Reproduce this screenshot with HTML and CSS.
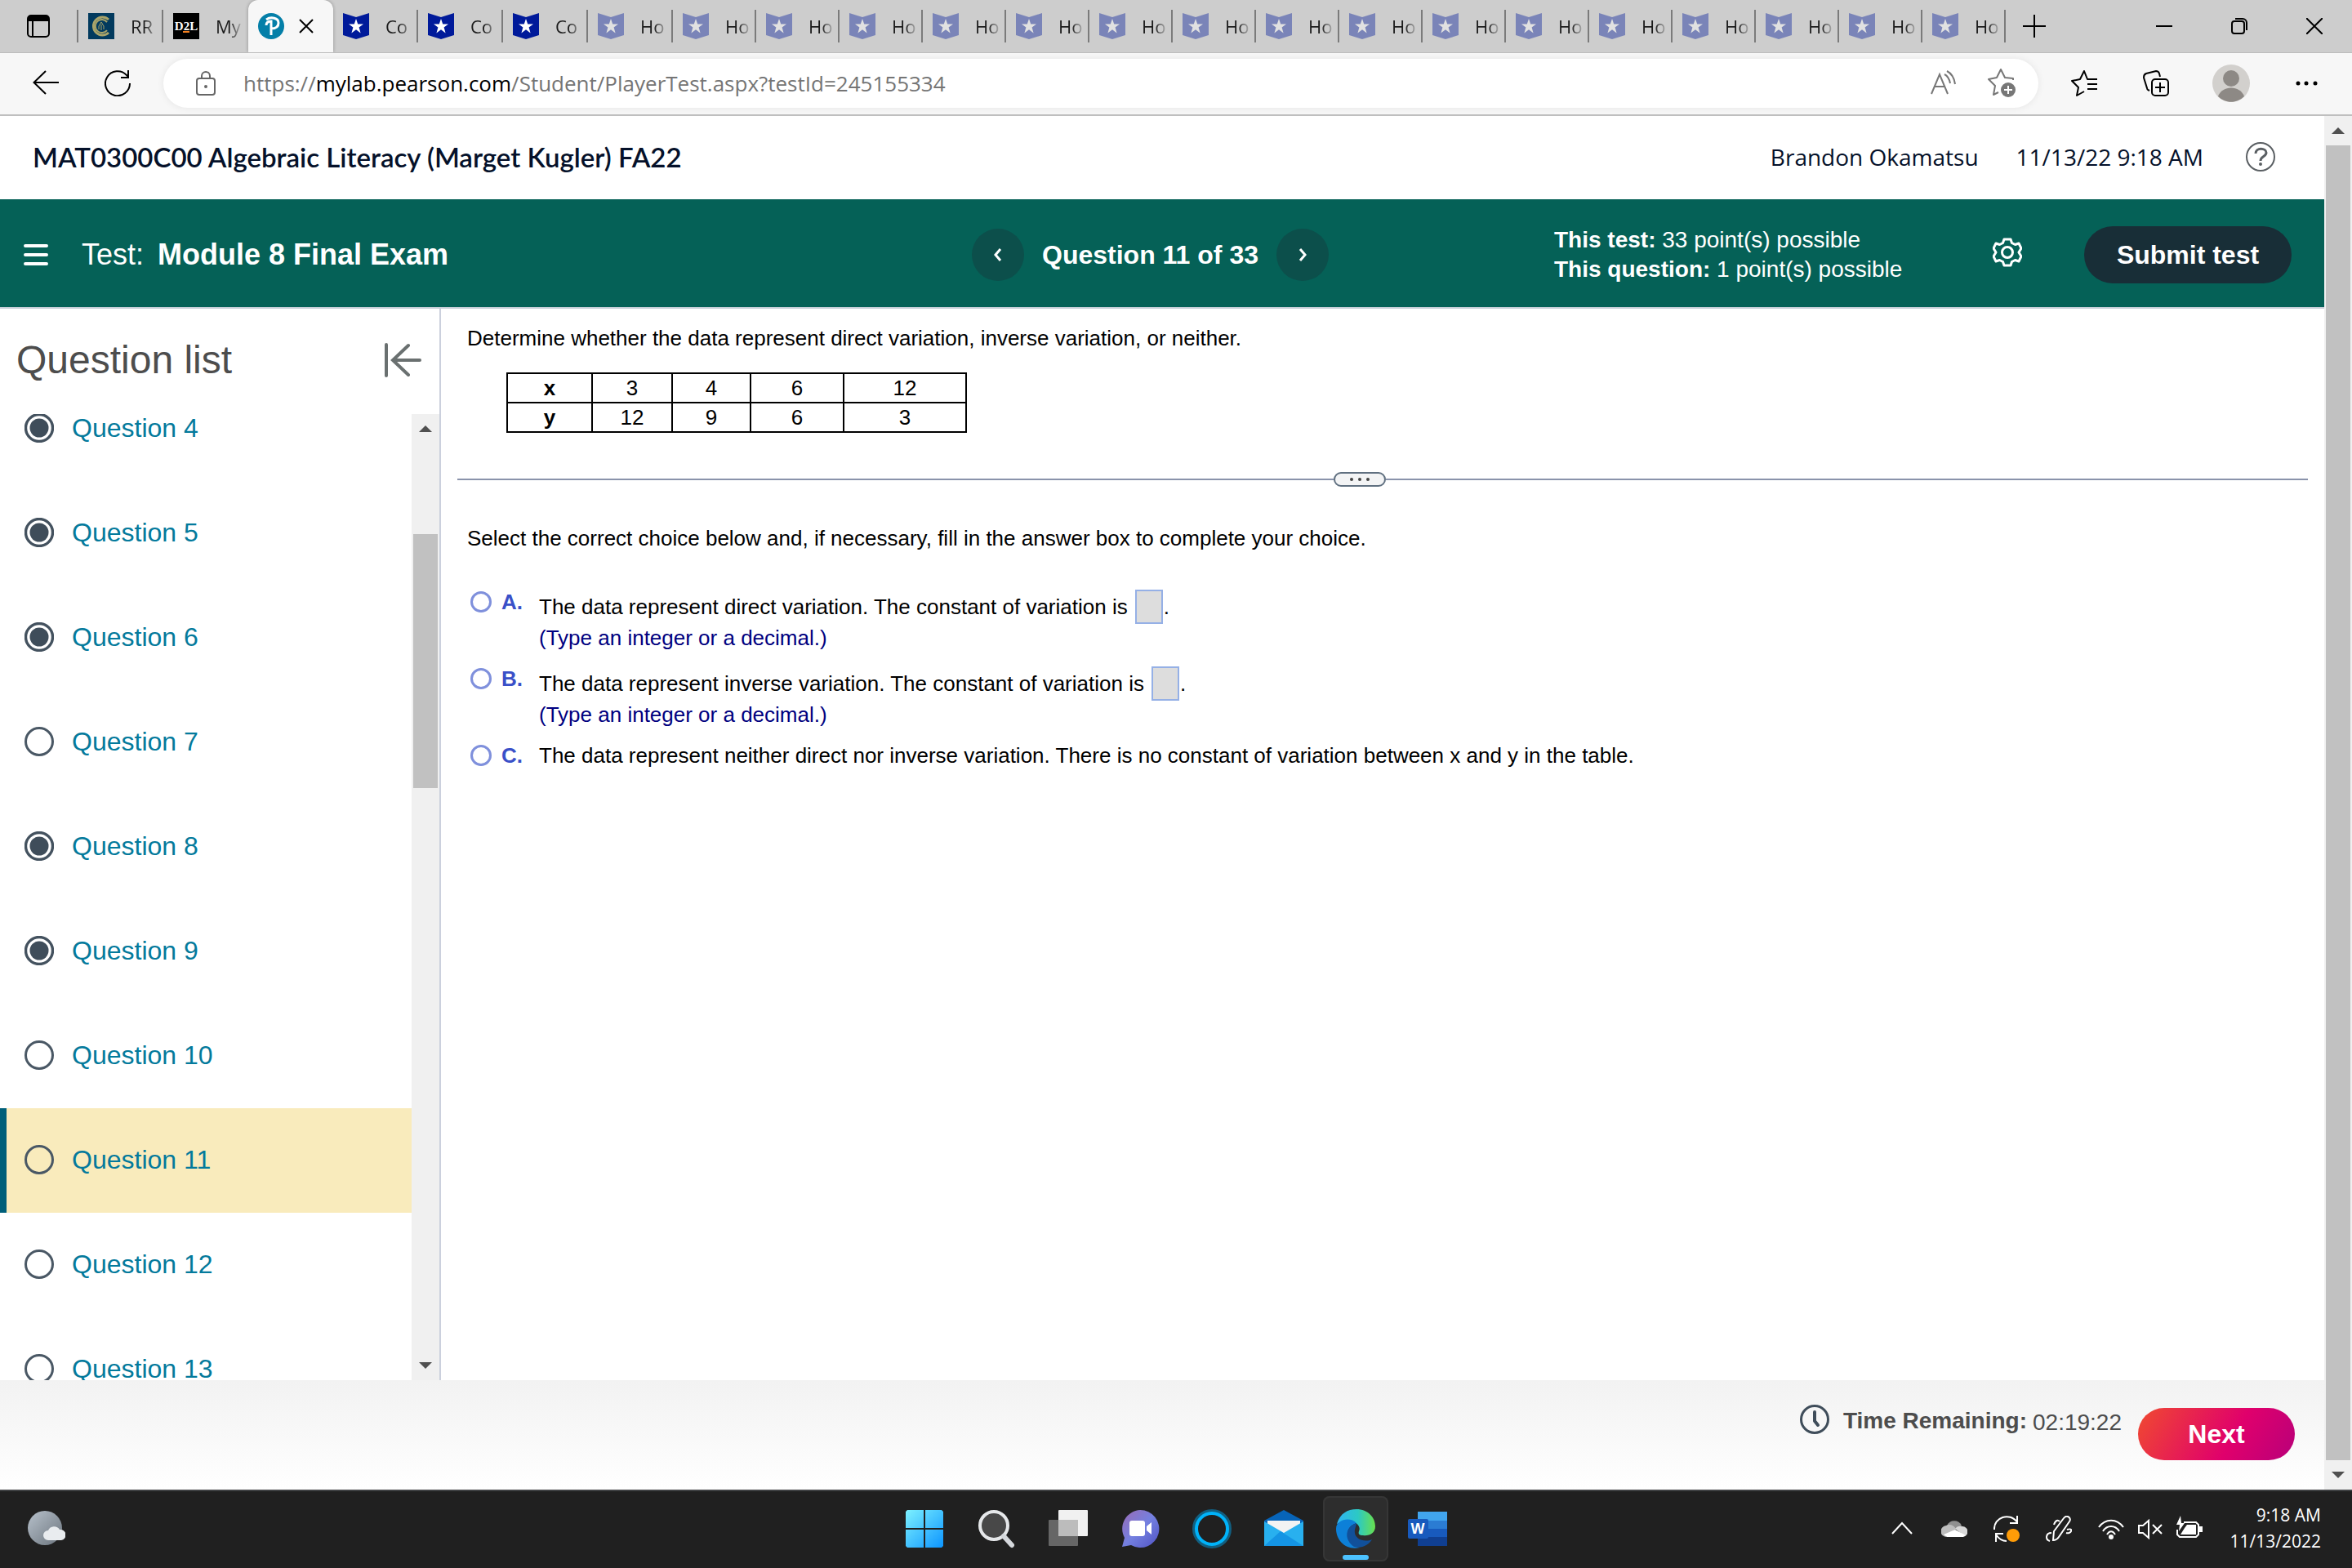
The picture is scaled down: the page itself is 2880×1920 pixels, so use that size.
FILE: index.html
```
<!DOCTYPE html>
<html lang="en">

<head>
    <meta charset="UTF-8">
    <title>Module 8 Final Exam</title>
    <link rel="stylesheet" href="styles.css">
</head>

<body>
    <!-- shared icons -->
    <svg class="defs" width="0" height="0">
        <defs>
            <symbol id="badge" viewBox="0 0 32 32">
                <path d="M0 0l16 5L32 0v27l-16 5-16-5z" fill="#001a9a" />
                <path d="M16 7l2.200 6.400h6.800l-5.400 4.100 2 6.900-5.600-4.100-5.600 4.100 2-6.900L7 13.400h6.800z" fill="#fff" />
            </symbol>
            <symbol id="done" viewBox="0 0 36 36">
                <circle cx="18" cy="18" r="16.500" fill="#fff" stroke="#44525f" stroke-width="3.400" />
                <circle cx="18" cy="18" r="11.500" fill="#3f4d5a" />
            </symbol>
            <symbol id="open" viewBox="0 0 36 36">
                <circle cx="18" cy="18" r="16.500" fill="none" stroke="#4a5865" stroke-width="3" />
            </symbol>
        </defs>
    </svg>

    <header class="tabs">
        <button class="tab-actions" aria-label="Tab actions">
            <svg width="28" height="28" viewBox="0 0 28 28"><rect x="1" y="1" width="26" height="26" rx="4" fill="none" stroke="#000" stroke-width="2" /><path d="M1 8V5a4 4 0 0 1 4-4h18a4 4 0 0 1 4 4v3z" /><path d="M7 8v19" stroke="#000" stroke-width="2" /></svg>
        </button>
        <a class="tab" href="#">
            <svg class="icon" viewBox="0 0 32 32"><path d="M0 0h32v32H0z" fill="#023a5e" /><g fill="none" stroke="#a9a46a"><path d="M25 8a11 11 0 1 0 0 16" stroke-width="3" /><path d="M23 11a8 8 0 1 0 0 10" stroke-width="2" /><path d="M13 20v-4l3-5 3 5v4M16 14v7" /></g></svg>
            <span class="name">RR</span>
        </a>
        <a class="tab no-line" href="#">
            <svg class="icon" viewBox="0 0 32 32"><path d="M0 0h32v32H0z" /><path d="M12 23h8" stroke="#f58020" stroke-width="2" /><text x="16" y="21" class="d2l">D2L</text></svg>
            <span class="name">My</span>
        </a>
        <div class="tab active">
            <svg class="icon" viewBox="0 0 32 32"><circle cx="16" cy="16" r="16" fill="#047fa8" /><path d="M16 27V10c-4 0-6 2-6 5M10 8c6-4 15-2 15 4 0 5-4 7-9 7" fill="none" stroke="#fff" stroke-width="3" /></svg>
            <button class="close" aria-label="Close tab"><svg width="18" height="18" viewBox="0 0 18 18"><path d="M1 1l16 16M17 1L1 17" stroke="#000" stroke-width="2" /></svg></button>
        </div>
        <a class="tab" href="#"><svg class="icon"><use href="#badge" /></svg><span class="name">Co</span></a>
        <a class="tab" href="#"><svg class="icon"><use href="#badge" /></svg><span class="name">Co</span></a>
        <a class="tab" href="#"><svg class="icon"><use href="#badge" /></svg><span class="name">Co</span></a>
        <a class="tab asleep" href="#"><svg class="icon"><use href="#badge" /></svg><span class="name">Ho</span></a>
        <a class="tab asleep narrow" href="#"><svg class="icon"><use href="#badge" /></svg><span class="name">Ho</span></a>
        <a class="tab asleep narrow" href="#"><svg class="icon"><use href="#badge" /></svg><span class="name">Ho</span></a>
        <a class="tab asleep narrow" href="#"><svg class="icon"><use href="#badge" /></svg><span class="name">Ho</span></a>
        <a class="tab asleep narrow" href="#"><svg class="icon"><use href="#badge" /></svg><span class="name">Ho</span></a>
        <a class="tab asleep narrow" href="#"><svg class="icon"><use href="#badge" /></svg><span class="name">Ho</span></a>
        <a class="tab asleep narrow" href="#"><svg class="icon"><use href="#badge" /></svg><span class="name">Ho</span></a>
        <a class="tab asleep narrow" href="#"><svg class="icon"><use href="#badge" /></svg><span class="name">Ho</span></a>
        <a class="tab asleep narrow" href="#"><svg class="icon"><use href="#badge" /></svg><span class="name">Ho</span></a>
        <a class="tab asleep narrow" href="#"><svg class="icon"><use href="#badge" /></svg><span class="name">Ho</span></a>
        <a class="tab asleep narrow" href="#"><svg class="icon"><use href="#badge" /></svg><span class="name">Ho</span></a>
        <a class="tab asleep narrow" href="#"><svg class="icon"><use href="#badge" /></svg><span class="name">Ho</span></a>
        <a class="tab asleep narrow" href="#"><svg class="icon"><use href="#badge" /></svg><span class="name">Ho</span></a>
        <a class="tab asleep narrow" href="#"><svg class="icon"><use href="#badge" /></svg><span class="name">Ho</span></a>
        <a class="tab asleep narrow" href="#"><svg class="icon"><use href="#badge" /></svg><span class="name">Ho</span></a>
        <a class="tab asleep narrow" href="#"><svg class="icon"><use href="#badge" /></svg><span class="name">Ho</span></a>
        <a class="tab asleep narrow" href="#"><svg class="icon"><use href="#badge" /></svg><span class="name">Ho</span></a>
        <button class="new-tab" aria-label="New tab"><svg width="28" height="28" viewBox="0 0 28 28"><path d="M14 0v28M0 14h28" stroke="#000" stroke-width="2" /></svg></button>
        <div class="window-buttons">
            <button aria-label="Minimize"><svg width="20" height="20" viewBox="0 0 20 20"><path d="M0 10h20" stroke="#000" stroke-width="2" /></svg></button>
            <button aria-label="Restore"><svg width="20" height="20" viewBox="0 0 20 20" fill="none" stroke="#000" stroke-width="2"><rect x="1" y="4" width="15" height="15" rx="3" /><path d="M5 1h9a5 5 0 0 1 5 5v9" /></svg></button>
            <button aria-label="Close"><svg width="20" height="20" viewBox="0 0 20 20"><path d="M0 0l20 20M20 0L0 20" stroke="#000" stroke-width="2" /></svg></button>
        </div>
    </header>

    <nav class="toolbar">
        <button class="back" aria-label="Back"><svg width="32" height="32" viewBox="0 0 32 32" fill="none" stroke="#000" stroke-width="2"><path d="M32 15H1M16 1L1.500 15 16 29" /></svg></button>
        <button class="reload" aria-label="Refresh"><svg width="32" height="32" viewBox="0 0 32 32" fill="none" stroke="#000" stroke-width="2"><path d="M31 16A15 15 0 1 1 27 6l2 2.500M29 0v9h-9" /></svg></button>
        <div class="address">
            <svg class="lock" width="24" height="30" viewBox="0 0 24 30" fill="none" stroke="#666" stroke-width="2"><rect x="1" y="9" width="22" height="20" rx="3" /><path d="M7 9V6a5 5 0 0 1 10 0v3" /><circle cx="12" cy="19" r="1" fill="#666" /></svg>
            <div class="url" role="textbox" aria-label="Address">https://<b>mylab.pearson.com</b>/Student/PlayerTest.aspx?testId=245155334</div>
            <button aria-label="Read aloud"><svg width="32" height="32" viewBox="0 0 32 32" fill="none" stroke="#777" stroke-width="2"><path d="M1 29L11 5l10 24M5 20h12M17 5c4 2 6 6 7 11M20 1c6 3 9 9 10 16" /></svg></button>
            <button aria-label="Add to favorites"><svg width="36" height="36" viewBox="0 0 36 36"><path d="M31 14v-2l-10-1-5-10-5 10-10 2 8 8-2 11 6-3" fill="none" stroke="#777" stroke-width="2" stroke-linejoin="round" /><circle cx="25" cy="26" r="9" fill="#777" /><path d="M25 21v10M20 26h10" stroke="#fff" stroke-width="2" /></svg></button>
        </div>
        <button aria-label="Favorites"><svg width="32" height="32" viewBox="0 0 32 32" fill="none" stroke="#000" stroke-width="2" stroke-linejoin="round"><path d="M32 11H20L16 1l-5 10-10 2 8 8-2 10 9-5M20 17h12M20 23h12" /></svg></button>
        <button class="collections" aria-label="Collections"><svg width="32" height="32" viewBox="0 0 32 32" fill="none" stroke="#000" stroke-width="2"><rect x="11" y="11" width="20" height="20" rx="4" /><path d="M21 15v12M15 21h12M21 8l-1-4c-1-3-3-3-4-3L4 4C1 5 1 7 1 9l4 13c0 2 1 2 3 3" /></svg></button>
        <button class="avatar" aria-label="Profile"><svg width="48" height="48" viewBox="0 0 48 48"><circle cx="24" cy="24" r="23" fill="#d2d0cd" /><circle cx="24" cy="18" r="10" fill="#8d8985" /><path d="M8 40c5-14 27-14 32 0-9 9-23 9-32 0z" fill="#8d8985" /></svg></button>
        <button class="more" aria-label="Settings and more"><svg width="32" height="32" viewBox="0 0 32 32"><circle cx="6" cy="16" r="2.500" /><circle cx="16" cy="16" r="2.500" /><circle cx="27" cy="16" r="2.500" /></svg></button>
    </nav>

    <div class="viewport">
        <div class="page">
            <div class="course">
                <h1>MAT0300C00 Algebraic Literacy (Marget Kugler) FA22</h1>
                <span class="user">Brandon Okamatsu</span>
                <span class="date">11/13/22 9:18 AM</span>
                <button class="help" aria-label="Help"><svg width="36" height="36" viewBox="0 0 36 36" fill="none" stroke="#5a5f63" stroke-width="2"><circle cx="18" cy="18" r="17" /><path d="M12 14c0-8 13-7 13-1 0 5-7 4-7 10" stroke-width="3" /><circle cx="18" cy="27" r="1" /></svg></button>
            </div>

            <div class="test-bar">
                <div class="test-name">
                    <button class="menu" aria-label="Menu"><svg width="32" height="28" viewBox="0 0 32 28"><path d="M3 3h26M3 14h26M3 25h26" stroke="#fff" stroke-width="4" stroke-linecap="round" /></svg></button>
                    <span>Test:</span>
                    <strong>Module 8 Final Exam</strong>
                </div>
                <div class="pager">
                    <button aria-label="Previous question"><svg width="12" height="16" viewBox="0 0 12 16"><path d="M9 1L3 8l6 7" fill="none" stroke="#fff" stroke-width="3" /></svg></button>
                    <strong>Question 11 of 33</strong>
                    <button aria-label="Next question"><svg width="12" height="16" viewBox="0 0 12 16"><path d="M3 1l6 7-6 7" fill="none" stroke="#fff" stroke-width="3" /></svg></button>
                </div>
                <div class="points">
                    <div><strong>This test:</strong> 33 point(s) possible</div>
                    <div><strong>This question:</strong> 1 point(s) possible</div>
                </div>
                <div class="test-actions">
                    <button class="gear" aria-label="Settings"><svg width="36" height="36" viewBox="0 0 36 36" fill="none" stroke="#fff" stroke-width="3" stroke-linejoin="round"><circle cx="18" cy="18" r="6.500" /><path d="M14 2h8l1.500 4.500 4 2 4.500-1.500 3 6-3 5 3 5-3 6-4.500-1.500-4 2L22 34h-8l-1.500-4.500-4-2L4 29l-3-6 3-5-3-5 3-6 4.500 1.500 4-2z" /></svg></button>
                    <button class="submit">Submit test</button>
                </div>
            </div>

            <div class="columns">
                <aside class="sidebar">
                    <div class="sidebar-head">
                        <h2>Question list</h2>
                        <button aria-label="Collapse list"><svg width="46" height="42" viewBox="0 0 46 42" fill="none" stroke="#6a7070" stroke-width="4" stroke-linecap="round"><path d="M3 2v38M44 21H12M30 3L11 21l19 18" /></svg></button>
                    </div>
                    <div class="list-box">
                        <ul class="list">
                            <li><a href="#"><svg><use href="#done" /></svg>Question 4</a></li>
                            <li><a href="#"><svg><use href="#done" /></svg>Question 5</a></li>
                            <li><a href="#"><svg><use href="#done" /></svg>Question 6</a></li>
                            <li><a href="#"><svg><use href="#open" /></svg>Question 7</a></li>
                            <li><a href="#"><svg><use href="#done" /></svg>Question 8</a></li>
                            <li><a href="#"><svg><use href="#done" /></svg>Question 9</a></li>
                            <li><a href="#"><svg><use href="#open" /></svg>Question 10</a></li>
                            <li class="current"><a href="#"><svg><use href="#open" /></svg>Question 11</a></li>
                            <li><a href="#"><svg><use href="#open" /></svg>Question 12</a></li>
                            <li><a href="#"><svg><use href="#open" /></svg>Question 13</a></li>
                        </ul>
                        <div class="scrollbar list-scroll">
                            <i class="up"></i>
                            <div class="track"><div class="thumb"></div></div>
                            <i class="down"></i>
                        </div>
                    </div>
                </aside>

                <main class="question">
                    <p>Determine whether the data represent direct variation, inverse variation, or neither.</p>
                    <table>
                        <tr><th class="w1">x</th><td class="w2">3</td><td class="w3">4</td><td class="w4">6</td><td class="w5">12</td></tr>
                        <tr><th>y</th><td>12</td><td>9</td><td>6</td><td>3</td></tr>
                    </table>
                    <div class="divider">
                        <button aria-label="Resize"><i></i><i></i><i></i></button>
                    </div>
                    <p>Select the correct choice below and, if necessary, fill in the answer box to complete your choice.</p>
                    <div class="choices">
                        <div class="choice">
                            <input type="radio" name="choice" id="a">
                            <label for="a">A.</label>
                            <div>
                                <div class="line">The data represent direct variation. The constant of variation is <input type="text" aria-label="Direct constant">.</div>
                                <div class="hint">(Type an integer or a decimal.)</div>
                            </div>
                        </div>
                        <div class="choice">
                            <input type="radio" name="choice" id="b">
                            <label for="b">B.</label>
                            <div>
                                <div class="line">The data represent inverse variation. The constant of variation is <input type="text" aria-label="Inverse constant">.</div>
                                <div class="hint">(Type an integer or a decimal.)</div>
                            </div>
                        </div>
                        <div class="choice">
                            <input type="radio" name="choice" id="c">
                            <label for="c">C.</label>
                            <div>The data represent neither direct nor inverse variation. There is no constant of variation between x and y in the table.</div>
                        </div>
                    </div>
                </main>
            </div>

            <footer class="bottom">
                <div class="timer">
                    <svg width="36" height="36" viewBox="0 0 36 36" fill="none" stroke="#3f4d5a" stroke-width="3"><circle cx="18" cy="18" r="16.500" /><path d="M18 9v11l4 5" stroke-width="4" stroke-linecap="round" stroke-linejoin="round" /></svg>
                    <strong>Time Remaining:</strong>
                    <span>02:19:22</span>
                </div>
                <button class="next">Next</button>
            </footer>
        </div>
        <div class="scrollbar page-scroll">
            <i class="up"></i>
            <div class="track"><div class="thumb"></div></div>
            <i class="down"></i>
        </div>
    </div>

    <footer class="taskbar">
        <div class="weather">
            <svg width="46" height="44" viewBox="0 0 46 44">
                <defs><linearGradient id="moon" x1="0" y1="0" x2="1" y2="1"><stop offset="0" stop-color="#b8c2cc" /><stop offset="1" stop-color="#6b747d" /></linearGradient></defs>
                <circle cx="21" cy="21" r="21" fill="url(#moon)" />
                <path d="M25 36a6 6 0 0 1 0-12 8 8 0 0 1 14-1 6 6 0 0 1 2 13z" fill="#e9ecef" />
            </svg>
        </div>
        <div class="apps">
            <button aria-label="Start"><svg viewBox="0 0 48 48"><defs><linearGradient id="win" gradientUnits="userSpaceOnUse" x1="0" y1="0" x2="48" y2="48"><stop offset="0" stop-color="#7ff3ff" /><stop offset="1" stop-color="#0a93ff" /></linearGradient></defs><path d="M3 1h20v22H1V3zM25 1h20l2 2v20H25zM1 25h22v22H3l-2-2zM25 25h22v20l-2 2H25z" fill="url(#win)" /></svg></button>
            <button aria-label="Search"><svg viewBox="0 0 48 48"><circle cx="21" cy="20" r="17" fill="#484848" stroke="#e6e8ea" stroke-width="4" /><path d="M33 33l10 11" stroke="#d5d8dc" stroke-width="6" stroke-linecap="round" /></svg></button>
            <button aria-label="Task view"><svg viewBox="0 0 48 48"><rect x="12" y="1" width="36" height="32" rx="1" fill="#f1f1f1" /><rect y="13" width="36" height="32" rx="1" fill="#666" /><path d="M12 13h24v20H12z" fill="#bcbcbc" /></svg></button>
            <button aria-label="Chat"><svg viewBox="0 0 48 48"><defs><linearGradient id="chat" x1="0" y1="0" x2="1" y2="1"><stop offset="0" stop-color="#9a6bb5" /><stop offset=".5" stop-color="#7480e0" /><stop offset="1" stop-color="#4f52c4" /></linearGradient></defs><path d="M24 1a23 23 0 1 1-11 43L2 46l3-11A23 23 0 0 1 24 1z" fill="url(#chat)" /><rect x="11" y="14" width="19" height="19" rx="3" fill="#fff" /><path d="M32 21l6-5v15l-6-5z" fill="#fff" /></svg></button>
            <button aria-label="Cortana"><svg viewBox="0 0 48 48" fill="none"><circle cx="24" cy="24" r="22" stroke="#125f80" stroke-width="4" /><circle cx="24" cy="24" r="19" stroke="#00b3fa" stroke-width="4" /></svg></button>
            <button aria-label="Mail"><svg viewBox="0 0 48 48"><path d="M0 14L24 1l24 13v10H0z" fill="#0764b8" /><path d="M4 14h40v10L24 32 4 24z" fill="#f3f3f3" /><path d="M0 15l24 14 24-14v30H0z" fill="#28b0ef" /><path d="M20 27l28 18H0z" fill="#1494e4" /></svg></button>
            <button class="running" aria-label="Edge">
                <svg viewBox="0 0 48 48">
                    <defs>
                        <linearGradient id="wave" x1="0" y1="0" x2="1" y2="0"><stop offset="0" stop-color="#2fb4f3" /><stop offset=".55" stop-color="#2cc9c4" /><stop offset="1" stop-color="#69e04d" /></linearGradient>
                    </defs>
                    <path d="M1 18C5 5 14 0 25 0c14 0 23 10 23 21 0 9-8 12-15 11-5 0-6-2-5-5 4-7-8-19-27-9z" fill="url(#wave)" />
                    <path d="M0 24C0 12 18 9 25 17c-9 3-13 10-10 19 2 7 8 10 14 11C12 51 0 38 0 24z" fill="#0d80d8" />
                    <path d="M25 17c-14 5-16 20-3 29 9 3 19-3 22-9-9 4-23 0-21-12 1-4 2-6 2-8z" fill="#11509a" />
                </svg>
            </button>
            <button aria-label="Word"><svg viewBox="0 0 48 48"><path d="M12 3h36v11H12z" fill="#41a5ee" /><path d="M12 14h36v10H12z" fill="#2b7cd3" /><path d="M12 24h36v10H12z" fill="#185abd" /><path d="M12 34h36v11H12z" fill="#103f91" /><rect y="12" width="25" height="24" rx="2" fill="#185abd" /><text x="12" y="30" class="word">W</text></svg></button>
        </div>
        <div class="tray">
            <svg width="32" height="32" viewBox="0 0 32 32"><path d="M4 22L16 9l12 13" /></svg>
            <svg width="32" height="32" viewBox="0 0 32 32" stroke="none"><path d="M7 12a10 10 0 0 1 18 0l-9 6z" fill="#909090" /><path d="M7 26a7 7 0 0 1-1-14c4-2 9-1 12 4L6 25z" fill="#bdbdbd" /><path d="M26 26a6 6 0 0 0 0-13c-4-1-7 0-9 3l12 9z" fill="#d8d8d8" /><path d="M3 23l14-6 13 7-3 2H7z" fill="#fff" /></svg>
            <svg width="32" height="32" viewBox="0 0 32 32"><path d="M1 17C0 2 20-5 29 8M29 0v9h-9M3 32V22h9M3 23c4 6 8 8 13 8" /><circle cx="24" cy="24" r="8" fill="#ff9c08" stroke="none" /></svg>
            <svg width="32" height="32" viewBox="0 0 32 32"><path d="M9 30l1-11L22 3c4-5 10 0 7 4L16 26c-2 3-5 4-7 4zM10 11c2-6 5-6 7-4M26 17c9-3 5 6-1 4M7 21c-7 0-8 8-2 10" /></svg>
            <svg width="32" height="32" viewBox="0 0 32 32"><path d="M1 14C9 3 23 3 31 14M6 19c5-8 15-8 20 0M11 23c3-5 7-5 10 0" /><circle cx="16" cy="26" r="2" fill="#fff" /></svg>
            <svg class="tight" width="32" height="32" viewBox="0 0 32 32"><path d="M2 12v9h5l7 6V6l-7 6zM19 11l11 11M30 11L19 22" /></svg>
            <svg class="tight" width="32" height="32" viewBox="0 0 32 32"><path d="M9 8h15l3 3v12l-3 3H4l-3-3v-6" /><path d="M13 11h11v12H5l5-8z" fill="#fff" stroke="none" /><path d="M28 13h4v7h-4zM5 0L0 11h4l-1 8 7-10H6z" fill="#fff" stroke="none" /></svg>
            <div class="clock">9:18 AM<br>11/13/2022</div>
        </div>
    </footer>
</body>

</html>
```
FILE: styles.css
```
* {
    box-sizing: border-box;
}

body {
    margin: 0;
    height: 100vh;
    display: flex;
    flex-direction: column;
    overflow: hidden;
    background: #fff;
    color: #000;
    font-family: "Liberation Sans", Arial, sans-serif;
}

button {
    display: flex;
    align-items: center;
    justify-content: center;
    padding: 0;
    border: none;
    background: none;
    font-family: inherit;
    cursor: pointer;
}

a {
    text-decoration: none;
}

svg {
    display: block;
    flex-shrink: 0;
}

h1,
h2,
p,
ul {
    margin: 0;
    padding: 0;
}

.defs {
    position: absolute;
}

/* browser tabs */
.tabs {
    display: flex;
    align-items: center;
    height: 64px;
    background: #cdcdcd;
    font-family: "Open Sans", "Noto Sans", sans-serif;
}

.tab-actions {
    width: 96px;
    height: 40px;
    border-right: 2px solid #7b7b7b;
}

.tab {
    display: flex;
    align-items: center;
    gap: 20px;
    flex-shrink: 0;
    width: 104px;
    height: 40px;
    padding: 0 4px 0 12px;
    border-right: 2px solid #7b7b7b;
    color: #1a1a1a;
    font-size: 22px;
    line-height: 32px;
}

.tab.narrow {
    width: 102px;
}

.tab.no-line {
    border-color: transparent;
}

.tab .icon {
    width: 32px;
    height: 32px;
}

.tab .name {
    flex: 1;
    -webkit-mask-image: linear-gradient(to right, #000 50%, transparent);
    mask-image: linear-gradient(to right, #000 50%, transparent);
}

.tab.asleep .icon {
    opacity: 0.4;
}

.tab.active {
    height: 64px;
    gap: 18px;
    background: #f7f7f7;
    border: none;
    border-radius: 12px 12px 0 0;
    box-shadow: 0 0 4px rgba(0, 0, 0, 0.3);
    clip-path: inset(0 -4px 0 -4px);
}

.d2l {
    fill: #fff;
    font: bold 15px "Liberation Serif", serif;
    text-anchor: middle;
}

.new-tab {
    margin-left: 21px;
}

.window-buttons {
    display: flex;
    margin-left: auto;
}

.window-buttons button {
    width: 92px;
    height: 64px;
}

/* address row */
.toolbar {
    display: flex;
    align-items: center;
    height: 78px;
    padding: 0 40px;
    background: #f7f7f7;
    border-bottom: 2px solid #bfbfbf;
    box-shadow: inset 0 1px 0 #bdbdbd;
}

.reload {
    margin-left: 56px;
}

.address {
    flex: 1;
    display: flex;
    align-items: center;
    gap: 38px;
    height: 60px;
    margin: 0 40px;
    padding: 0 26px 0 40px;
    border-radius: 30px;
    background: #fff;
    box-shadow: 0 0 10px rgba(0, 0, 0, 0.08);
}

.url {
    flex: 1;
    margin-left: -4px;
    color: #757575;
    font-family: "Open Sans", "Noto Sans", sans-serif;
    font-size: 26px;
    line-height: 34px;
}

.url b {
    color: #000;
    font-weight: 400;
}

.collections {
    margin-left: 56px;
}

.avatar {
    margin: 0 52px;
}

/* page area with its scrollbar */
.viewport {
    flex: 1;
    display: flex;
    min-height: 0;
}

.page {
    flex: 1;
    display: flex;
    flex-direction: column;
    min-width: 0;
}

.course {
    display: flex;
    align-items: center;
    height: 102px;
    padding: 0 60px 2px 40px;
    color: #05112a;
    font-family: "Open Sans", sans-serif;
}

.course h1 {
    flex: 1;
    font-family: Lato, sans-serif;
    font-size: 33px;
    font-weight: 600;
}

.course span {
    font-size: 28px;
}

.date {
    margin: 0 52px 0 46px;
}

.test-bar {
    display: grid;
    grid-template-columns: 1162fr 713fr 537fr auto;
    align-items: center;
    height: 134px;
    padding: 4px 40px 0 28px;
    background: #056157;
    border-bottom: 2px solid #c7cfd8;
    color: #fff;
}

.test-name {
    display: flex;
    align-items: center;
    font-size: 36px;
}

.test-name span {
    margin: 0 17px 0 40px;
}

.menu {
    width: 32px;
}

.pager {
    display: flex;
    align-items: center;
    gap: 22px;
    font-size: 32px;
}

.pager button {
    width: 64px;
    height: 64px;
    border-radius: 50%;
    background: #0c4f4b;
}

.points {
    font-size: 28px;
    line-height: 36px;
}

.test-actions {
    display: flex;
    align-items: center;
    gap: 76px;
}

.gear {
    padding-bottom: 6px;
}

.submit {
    width: 254px;
    height: 70px;
    border-radius: 35px;
    background: #182e37;
    color: #fff;
    font-size: 32px;
    font-weight: bold;
}

.columns {
    flex: 1;
    display: flex;
    min-height: 0;
}

/* question list */
.sidebar {
    display: flex;
    flex-direction: column;
    width: 540px;
    border-right: 2px solid #cbd0dd;
}

.sidebar-head {
    display: flex;
    align-items: center;
    justify-content: space-between;
    height: 129px;
    padding: 0 22px 4px 20px;
}

.sidebar h2 {
    color: #4d4d4d;
    font-size: 48px;
    font-weight: 400;
}

.list-box {
    flex: 1;
    display: flex;
    min-height: 0;
    overflow: hidden;
}

/* scrolled part of the way into question 4 */
.list {
    flex: 1;
    margin-top: -46px;
    list-style: none;
}

.list a {
    display: flex;
    align-items: center;
    gap: 22px;
    height: 128px;
    padding: 0 0 2px 30px;
    color: #047a9c;
    font-size: 32px;
}

.list svg {
    width: 36px;
    height: 36px;
}

.list .current a {
    padding-left: 22px;
    border-left: 8px solid #005f7a;
    background: #f9ebbc;
}

.scrollbar {
    display: flex;
    flex-direction: column;
    align-items: center;
    justify-content: space-between;
    width: 34px;
    background: #f0f0f0;
}

.scrollbar .track {
    flex: 1;
    width: 30px;
}

.scrollbar .thumb {
    background: #c1c1c1;
}

.scrollbar i {
    border: 8px solid transparent;
}

.scrollbar .up {
    margin: 14px 0;
    border-bottom-color: #505050;
    border-top-width: 0;
}

.scrollbar .down {
    margin: 14px 0;
    border-top-color: #505050;
    border-bottom-width: 0;
}

.list-scroll .thumb {
    height: 28%;
    margin-top: 111px;
}

.page-scroll .thumb {
    height: 100%;
}

/* question */
.question {
    flex: 1;
    padding: 21px 20px 0;
    font-size: 26px;
    line-height: 30px;
}

.question p {
    padding-left: 12px;
}

.question table {
    margin: 27px 0 48px 60px;
    border-collapse: collapse;
    text-align: center;
}

.question th,
.question td {
    height: 36px;
    padding: 0;
    border: 2px solid #000;
}

.w1 {
    width: 104px;
}

.w2 {
    width: 98px;
}

.w3 {
    width: 96px;
}

.w4 {
    width: 114px;
}

.w5 {
    width: 150px;
}

.divider {
    display: flex;
    align-items: center;
    margin-bottom: 48px;
}

.divider::before,
.divider::after {
    content: "";
    flex: 1073;
    height: 2px;
    background: #8a93ab;
}

.divider::after {
    flex: 1129;
}

.divider button {
    gap: 6px;
    width: 64px;
    height: 18px;
    border: 2px solid #607080;
    border-radius: 9px;
    background: #f3f4f5;
}

.divider i {
    width: 4px;
    height: 4px;
    border-radius: 50%;
    background: #444;
}

.choices {
    display: flex;
    flex-direction: column;
    gap: 20px;
    margin-top: 48px;
    padding-left: 16px;
}

.choice {
    display: grid;
    grid-template-columns: 38px 46px 1fr;
}

.choice input[type="radio"] {
    appearance: none;
    width: 26px;
    height: 26px;
    margin: 2px 0;
    border: 3px solid #7f90dc;
    border-radius: 50%;
}

.choice label {
    color: #3a50c8;
    font-weight: bold;
}

.line {
    display: flex;
    align-items: center;
    height: 42px;
}

.line input {
    width: 34px;
    height: 42px;
    margin: 0 1px 0 9px;
    border: 2px solid #95b0e6;
    background: #ddd;
}

.hint {
    margin-top: 2px;
    color: #000080;
}

/* timer and next */
.bottom {
    display: flex;
    align-items: flex-start;
    justify-content: flex-end;
    gap: 20px;
    height: 134px;
    padding: 30px 36px 0;
    background: linear-gradient(#f2f2f2, #fff);
}

.timer {
    display: flex;
    color: #4d4d4d;
    font-size: 28px;
    line-height: 40px;
}

.timer strong {
    margin: 0 7px 0 17px;
}

.timer span {
    line-height: 44px;
}

.next {
    width: 192px;
    height: 64px;
    margin-top: 4px;
    border-radius: 32px;
    background: linear-gradient(120deg, #f04a30, #e0006c 60%, #b8007a);
    color: #fff;
    font-size: 32px;
    font-weight: bold;
}

/* taskbar */
.taskbar {
    display: grid;
    grid-template-columns: 1fr auto 1fr;
    align-items: center;
    height: 96px;
    background: #202020;
    box-shadow: inset 0 2px 0 #3f4143;
}

.weather {
    padding-left: 34px;
}

.apps {
    display: flex;
    gap: 8px;
}

.apps button {
    position: relative;
    width: 80px;
    height: 80px;
    border-radius: 8px;
}

.apps svg {
    width: 48px;
    height: 48px;
}

.running {
    background: #2d2d2d;
    box-shadow: inset 0 0 0 2px #363636;
}

.running::after {
    content: "";
    position: absolute;
    left: 24px;
    bottom: 2px;
    width: 32px;
    height: 6px;
    border-radius: 3px;
    background: #4cc2ff;
}

.word {
    fill: #fff;
    font: bold 18px "Liberation Sans", sans-serif;
    text-anchor: middle;
}

.tray {
    display: flex;
    align-items: center;
    justify-content: flex-end;
    gap: 32px;
    padding-right: 38px;
    color: #fff;
    fill: none;
    stroke: #fff;
    stroke-width: 2px;
}

.tray .tight {
    margin-left: -16px;
}

.clock {
    width: 113px;
    padding-bottom: 2px;
    font-family: "Open Sans", "Noto Sans", sans-serif;
    font-size: 21px;
    line-height: 32px;
    text-align: right;
}
```
